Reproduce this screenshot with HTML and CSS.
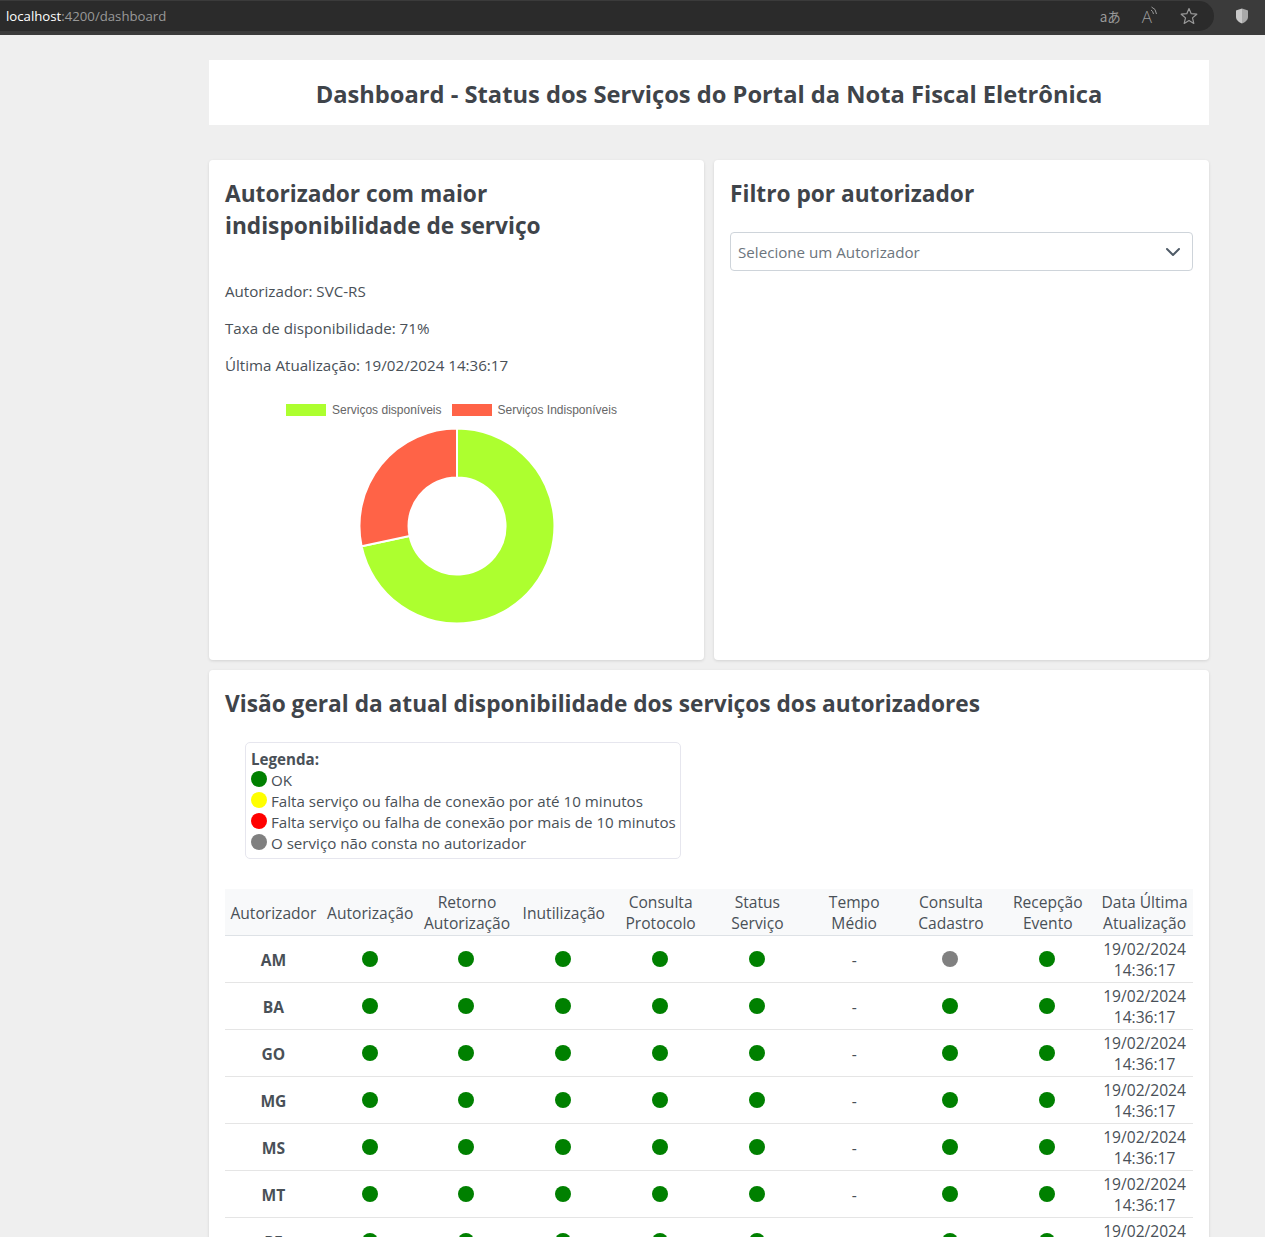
FILE: index.html
```html
<!DOCTYPE html>
<html lang="pt-BR">
<head>
<meta charset="UTF-8">
<title>Dashboard</title>
<link rel="stylesheet" href="styles.css">
</head>
<body>

<div class="browser-bar">
    <div class="url-pill">
        <span class="url"><span class="url-host">localhost</span>:4200/dashboard</span>
        <span class="bar-icon translate-icon">aあ</span>
        <span class="bar-icon read-icon">
            A
            <svg class="waves" width="8" height="10" viewBox="0 0 8 10"><path d="M1 4 Q3 5 3.500 8M1.500 1 Q6 2.500 6.500 8" fill="none" stroke="#9a9a9a" stroke-width="1"/></svg>
        </span>
        <svg class="bar-icon star-icon" width="18" height="18" viewBox="0 0 18 18"><path d="M9 1.500 L11.200 6.700 L16.800 7.200 L12.500 10.900 L13.800 16.400 L9 13.500 L4.200 16.400 L5.500 10.900 L1.200 7.200 L6.800 6.700 Z" fill="none" stroke="#9a9a9a" stroke-width="1.200" stroke-linejoin="round"/></svg>
    </div>
    <svg class="shield" width="14" height="16" viewBox="0 0 14 16">
        <path d="M7 0.500 L7 15.500 C4 14.500 1 12 1 9 L1 3 Q1 2.500 1.500 2.300 Z" fill="#c8c8c8"/>
        <path d="M7 0.500 L12.500 2.300 Q13 2.500 13 3 L13 9 C13 12 10 14.500 7 15.500 Z" fill="#a8a8a8"/>
    </svg>
</div>

<div class="container">

    <div class="title-card">
        <h1>Dashboard - Status dos Serviços do Portal da Nota Fiscal Eletrônica</h1>
    </div>

    <div class="top-grid">
        <div class="card worst-card">
            <h2>Autorizador com maior indisponibilidade de serviço</h2>
            <p>Autorizador: SVC-RS</p>
            <p>Taxa de disponibilidade: 71%</p>
            <p>Última Atualização: 19/02/2024 14:36:17</p>

            <div class="chart-legend">
                <span class="swatch swatch-ok"></span>Serviços disponíveis
                <span class="swatch swatch-off"></span>Serviços Indisponíveis
            </div>
            <svg class="donut" width="198" height="198" viewBox="-99 -99 198 198">
                <path d="M0 -97.500 A97.500 97.500 0 1 1 -95.400 20.300 L-47.400 10.100 A48.500 48.500 0 1 0 0 -48.500 Z" fill="#adff2f" stroke="#fff" stroke-width="2"/>
                <path d="M-95.400 20.300 A97.500 97.500 0 0 1 0 -97.500 L0 -48.500 A48.500 48.500 0 0 0 -47.400 10.100 Z" fill="#ff6347" stroke="#fff" stroke-width="2"/>
            </svg>
        </div>

        <div class="card filter-card">
            <h2>Filtro por autorizador</h2>
            <div class="select-box">
                Selecione um Autorizador
                <svg width="16" height="16" viewBox="0 0 16 16"><path d="M2 5 L8 11 L14 5" fill="none" stroke="#4f5b67" stroke-width="2" stroke-linecap="round" stroke-linejoin="round"/></svg>
            </div>
        </div>
    </div>

    <div class="card overview-card">
        <h2>Visão geral da atual disponibilidade dos serviços dos autorizadores</h2>

        <div class="legend">
            <strong>Legenda:</strong>
            <div><span class="dot green"></span> OK</div>
            <div><span class="dot yellow"></span> Falta serviço ou falha de conexão por até 10 minutos</div>
            <div><span class="dot red"></span> Falta serviço ou falha de conexão por mais de 10 minutos</div>
            <div><span class="dot gray"></span> O serviço não consta no autorizador</div>
        </div>

        <table class="status-table">
            <thead>
                <tr>
                    <th>Autorizador</th>
                    <th>Autorização</th>
                    <th>Retorno Autorização</th>
                    <th>Inutilização</th>
                    <th>Consulta Protocolo</th>
                    <th>Status Serviço</th>
                    <th>Tempo Médio</th>
                    <th>Consulta Cadastro</th>
                    <th>Recepção Evento</th>
                    <th>Data Última Atualização</th>
                </tr>
            </thead>
            <tbody>
                <tr>
                    <td class="uf">AM</td>
                    <td><span class="dot green"></span></td>
                    <td><span class="dot green"></span></td>
                    <td><span class="dot green"></span></td>
                    <td><span class="dot green"></span></td>
                    <td><span class="dot green"></span></td>
                    <td>-</td>
                    <td><span class="dot gray"></span></td>
                    <td><span class="dot green"></span></td>
                    <td class="date">19/02/2024 14:36:17</td>
                </tr>
                <tr>
                    <td class="uf">BA</td>
                    <td><span class="dot green"></span></td>
                    <td><span class="dot green"></span></td>
                    <td><span class="dot green"></span></td>
                    <td><span class="dot green"></span></td>
                    <td><span class="dot green"></span></td>
                    <td>-</td>
                    <td><span class="dot green"></span></td>
                    <td><span class="dot green"></span></td>
                    <td class="date">19/02/2024 14:36:17</td>
                </tr>
                <tr>
                    <td class="uf">GO</td>
                    <td><span class="dot green"></span></td>
                    <td><span class="dot green"></span></td>
                    <td><span class="dot green"></span></td>
                    <td><span class="dot green"></span></td>
                    <td><span class="dot green"></span></td>
                    <td>-</td>
                    <td><span class="dot green"></span></td>
                    <td><span class="dot green"></span></td>
                    <td class="date">19/02/2024 14:36:17</td>
                </tr>
                <tr>
                    <td class="uf">MG</td>
                    <td><span class="dot green"></span></td>
                    <td><span class="dot green"></span></td>
                    <td><span class="dot green"></span></td>
                    <td><span class="dot green"></span></td>
                    <td><span class="dot green"></span></td>
                    <td>-</td>
                    <td><span class="dot green"></span></td>
                    <td><span class="dot green"></span></td>
                    <td class="date">19/02/2024 14:36:17</td>
                </tr>
                <tr>
                    <td class="uf">MS</td>
                    <td><span class="dot green"></span></td>
                    <td><span class="dot green"></span></td>
                    <td><span class="dot green"></span></td>
                    <td><span class="dot green"></span></td>
                    <td><span class="dot green"></span></td>
                    <td>-</td>
                    <td><span class="dot green"></span></td>
                    <td><span class="dot green"></span></td>
                    <td class="date">19/02/2024 14:36:17</td>
                </tr>
                <tr>
                    <td class="uf">MT</td>
                    <td><span class="dot green"></span></td>
                    <td><span class="dot green"></span></td>
                    <td><span class="dot green"></span></td>
                    <td><span class="dot green"></span></td>
                    <td><span class="dot green"></span></td>
                    <td>-</td>
                    <td><span class="dot green"></span></td>
                    <td><span class="dot green"></span></td>
                    <td class="date">19/02/2024 14:36:17</td>
                </tr>
                <tr>
                    <td class="uf">PE</td>
                    <td><span class="dot green"></span></td>
                    <td><span class="dot green"></span></td>
                    <td><span class="dot green"></span></td>
                    <td><span class="dot green"></span></td>
                    <td><span class="dot green"></span></td>
                    <td>-</td>
                    <td><span class="dot green"></span></td>
                    <td><span class="dot green"></span></td>
                    <td class="date">19/02/2024 14:36:17</td>
                </tr>
            </tbody>
        </table>
    </div>

</div>

</body>
</html>
```

FILE: styles.css
```css
html {
height: 1237px;
overflow: hidden;
}

body {
background-color: #efefef;
color: #495057;
font-family: "Open Sans", Arial, sans-serif;
font-size: 15.15px;
margin: 0;
padding: 0;
}

.browser-bar {
display: flex;
align-items: flex-start;
height: 35px;
background-color: #3b3b3b;
}

.url-pill {
flex: 1;
display: flex;
align-items: center;
height: 30px;
margin-top: 1px;
padding-left: 6px;
padding-right: 16px;
background-color: #2b2b2b;
border-radius: 0 15px 15px 0;
}

.url {
flex: 1;
color: #999;
font-size: 13.2px;
}

.url-host {
color: #fff;
}

.bar-icon {
color: #9a9a9a;
margin-left: 20px;
}

.translate-icon {
font-family: "Noto Sans CJK JP", "Open Sans", sans-serif;
font-size: 13.5px;
margin-right: 1px;
}

.read-icon {
font-size: 17px;
font-weight: 300;
display: flex;
align-items: flex-start;
margin-right: 2px;
}

.waves {
margin-top: 1px;
margin-left: -2px;
}

.shield {
margin: 8px 16px 0 21px;
}

.container {
width: 1000px;
margin-left: 209px;
padding-top: 25px;
}

.title-card {
background-color: #fff;
height: 65px;
box-sizing: border-box;
padding-top: 2px;
display: flex;
align-items: center;
justify-content: center;
}

h1 {
margin: 0;
font-size: 23.7px;
font-weight: 700;
color: #3f444a;
}

h2 {
margin: 0;
font-size: 22.7px;
line-height: 32px;
font-weight: 700;
color: #3f444a;
}

.card {
background-color: #fff;
border-radius: 4px;
padding: 18px 16px 16px;
box-shadow: 0 1px 3px rgba(0, 0, 0, 0.12);
}

.top-grid {
display: grid;
grid-template-columns: 1fr 1fr;
gap: 10px;
margin-top: 35px;
}

.worst-card {
height: 500px;
box-sizing: border-box;
}

.worst-card h2 {
margin-bottom: 39px;
}

.worst-card p {
margin: 0 0 17px;
line-height: 20px;
}

.chart-legend {
display: flex;
align-items: center;
justify-content: center;
height: 14px;
margin-top: 28px;
padding-right: 10px;
color: #666;
font-family: "Liberation Sans", Arial, sans-serif;
font-size: 12px;
}

.swatch {
width: 40px;
height: 12px;
margin-right: 6px;
}

.swatch-ok {
background-color: #adff2f;
}

.swatch-off {
background-color: #ff6347;
margin-left: 10px;
}

.donut {
display: block;
margin: 10px auto 0;
}

.select-box {
display: flex;
align-items: center;
justify-content: space-between;
height: 39px;
box-sizing: border-box;
margin-top: 22px;
padding: 0 11px 0 7px;
border: 1px solid #ced4da;
border-radius: 4px;
color: #6c757d;
}

.overview-card {
margin-top: 10px;
}

.legend {
width: 436px;
box-sizing: border-box;
margin: 22px 0 30px 20px;
padding: 6px 5px 4px;
border: 1px solid #e6e6ee;
border-radius: 5px;
line-height: 21px;
white-space: nowrap;
}

.dot {
display: inline-block;
width: 16px;
height: 16px;
border-radius: 50%;
vertical-align: -1px;
}

.green {
background-color: green;
}

.yellow {
background-color: yellow;
}

.red {
background-color: red;
}

.gray {
background-color: gray;
}

.status-table {
width: 100%;
table-layout: fixed;
border-collapse: collapse;
text-align: center;
font-size: 15.6px;
line-height: 21px;
}

.status-table th {
background-color: #f8f9fa;
font-weight: 400;
height: 46px;
padding: 3px 0 0;
box-sizing: border-box;
border-bottom: 1px solid #dee2e6;
}

.status-table td {
height: 47px;
padding: 4px 0 0;
box-sizing: border-box;
border-bottom: 1px solid #e5e5e5;
}

.status-table td .dot {
margin-right: 1px;
}

.status-table .uf {
font-weight: 700;
}

.status-table .date {
padding-top: 2px;
}
```
